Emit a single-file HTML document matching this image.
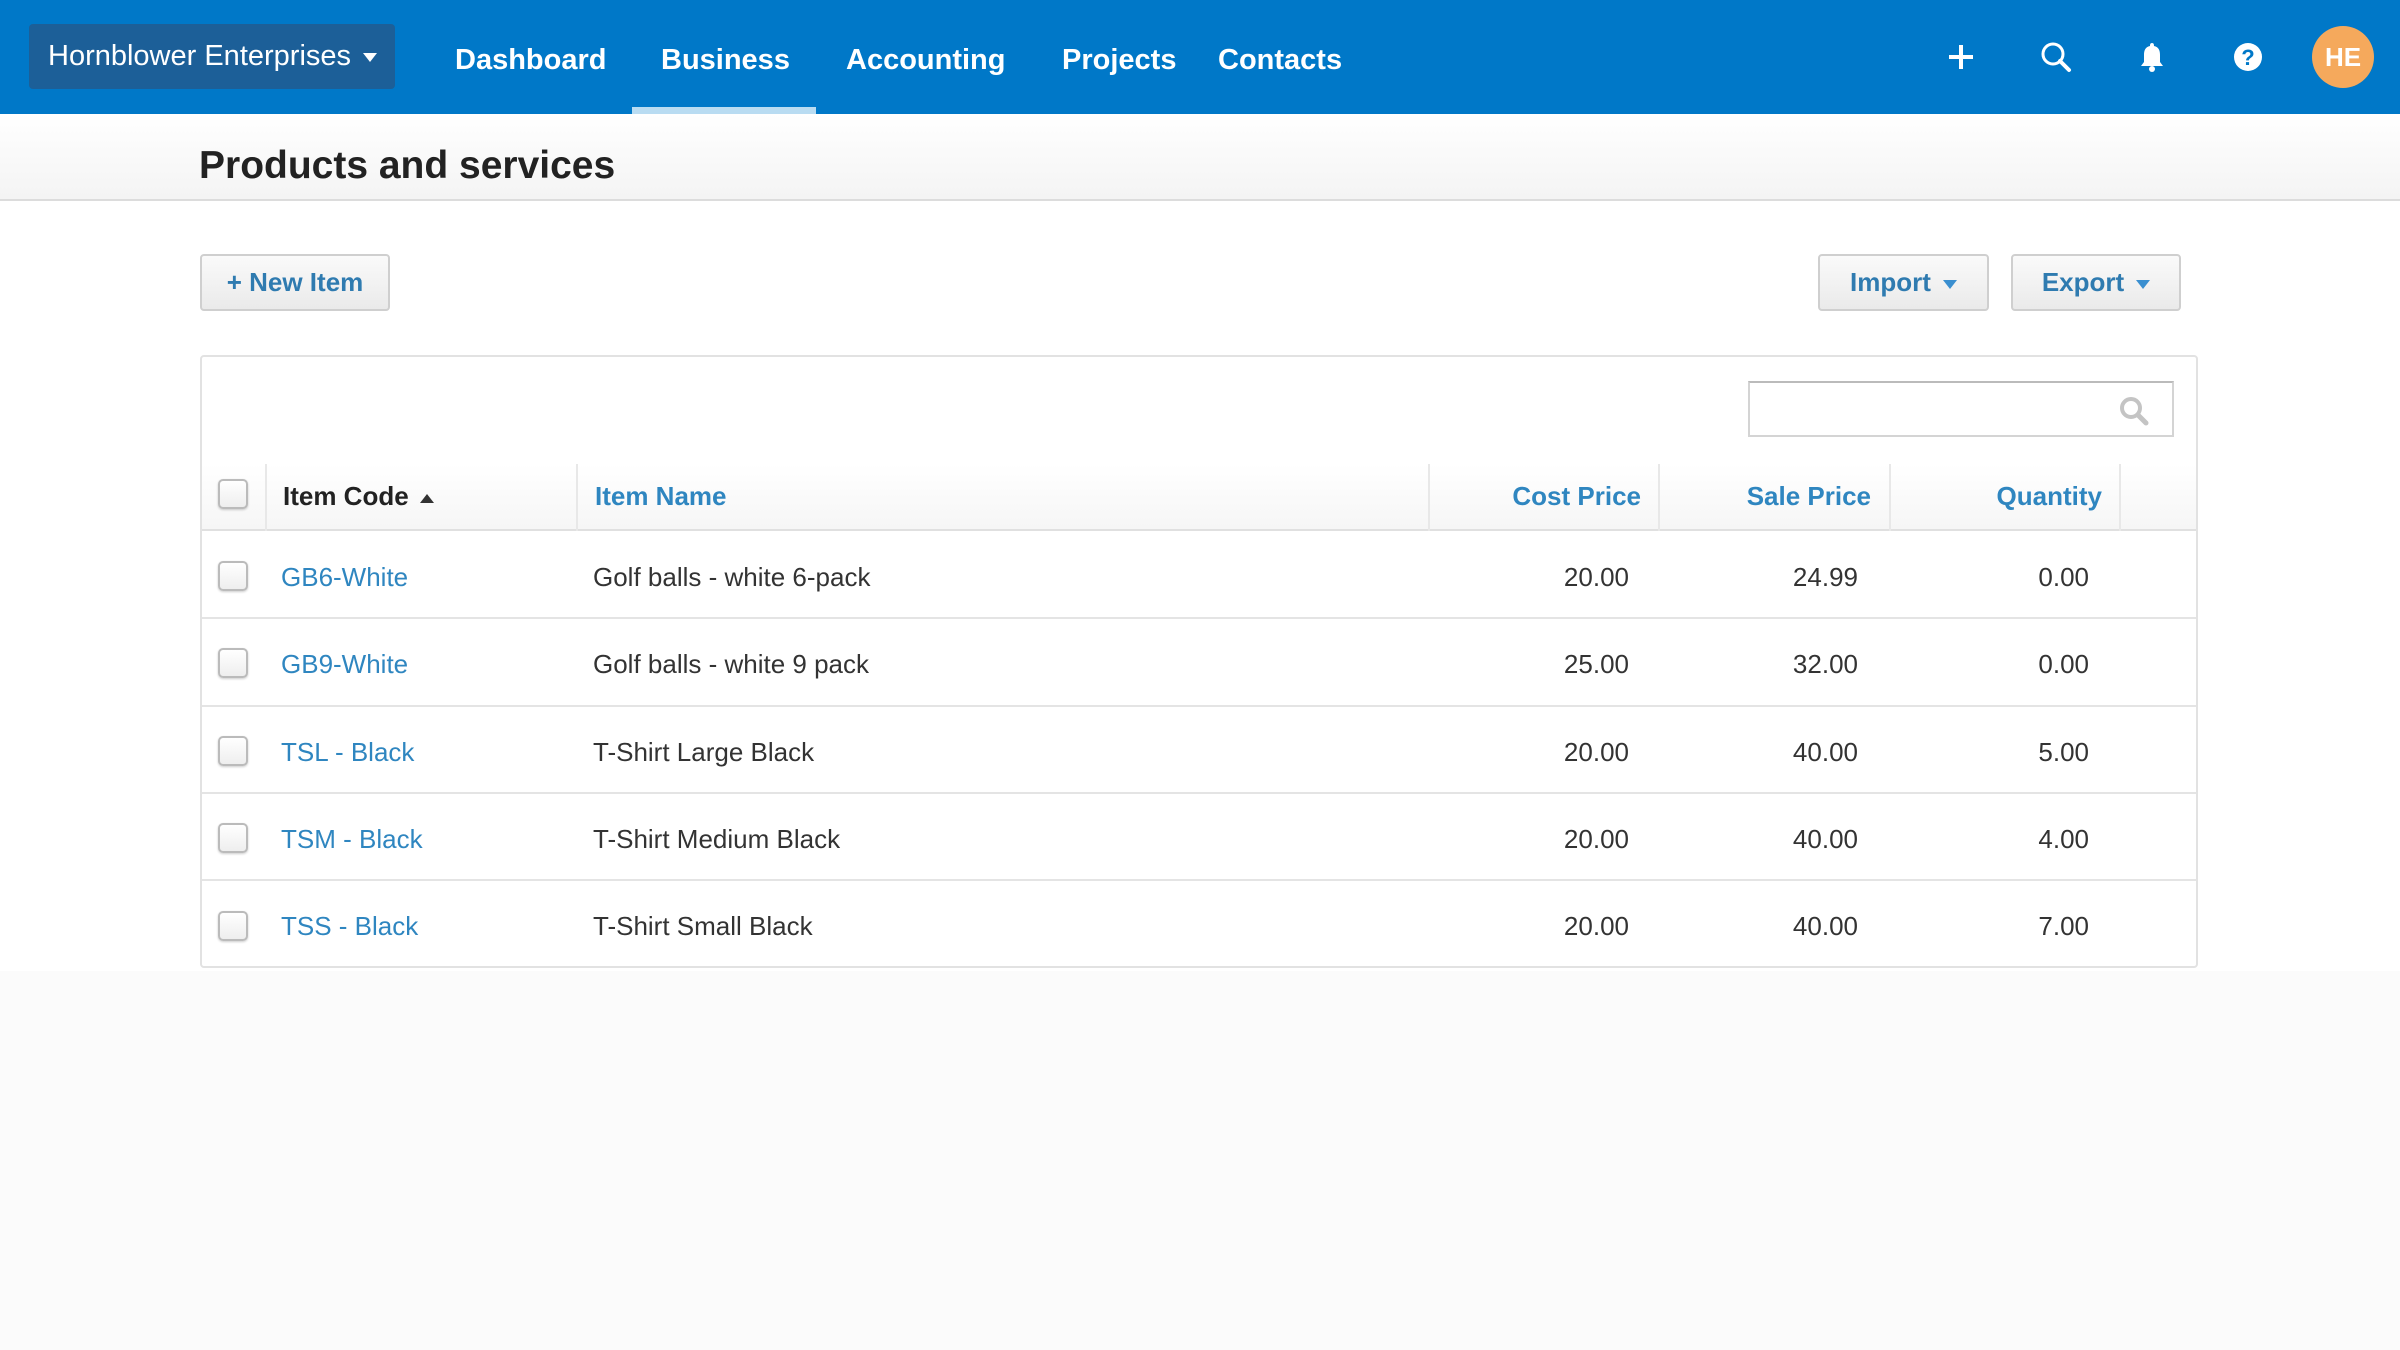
<!DOCTYPE html>
<html><head><meta charset="utf-8"><style>
*{margin:0;padding:0;box-sizing:border-box}
body{width:2400px;height:1350px;background:#fbfbfb;font-family:"Liberation Sans",sans-serif;position:relative;overflow:hidden;color:#333}
.nav{position:absolute;left:0;top:0;width:2400px;height:114px;background:#0078c8}
.org{position:absolute;left:29px;top:24px;width:366px;height:65px;background:#1c5f98;border-radius:4px;color:#fff;font-size:29px;line-height:65px;padding-left:19px}
.nl{position:absolute;top:40px;color:#fff;font-size:29px;font-weight:bold;line-height:40px}
.ul{position:absolute;left:632px;top:107px;width:184px;height:7px;background:#b9dcf2}
.hdr{position:absolute;left:0;top:114px;width:2400px;height:87px;background:linear-gradient(#fff,#f4f4f4);border-bottom:2px solid #dcdcdc}
.hdr h1{position:absolute;left:199px;top:30px;font-size:39px;font-weight:bold;color:#222}
.main{position:absolute;left:0;top:201px;width:2400px;height:770px;background:#fff}
.btn{position:absolute;top:254px;height:57px;border:2px solid #cfcfcf;border-radius:4px;background:linear-gradient(#fafafa,#eaeaea);color:#2f7bb0;font-size:26px;font-weight:bold;text-align:center;line-height:53px}
.tri{display:inline-block;width:0;height:0;border-left:7px solid transparent;border-right:7px solid transparent;border-top:9px solid #3a8fd0;vertical-align:middle;margin-left:12px}
.card{position:absolute;left:200px;top:355px;width:1998px;height:613px;border:2px solid #e2e2e2;border-radius:4px;background:#fff}
.search{position:absolute;left:1748px;top:381px;width:426px;height:56px;border:2px solid #d4d4d4;border-top-color:#bbb;background:#fff}
.th{position:absolute;top:464px;height:67px;left:202px;width:1994px;background:linear-gradient(#fff,#f6f6f6);border-bottom:2px solid #e0e0e0}
.div{position:absolute;top:464px;height:67px;width:2px;background:#e8e8e8}
.t{position:absolute;font-size:26px;line-height:30px;white-space:nowrap}
.h{font-weight:bold;color:#2f86c0}
.r{text-align:right}
.cb{position:absolute;left:218px;width:30px;height:30px;border:2px solid #bbb;border-radius:5px;background:linear-gradient(#fff,#eee);box-shadow:0 1px 2px rgba(0,0,0,.2)}
.row{position:absolute;left:202px;width:1994px;height:2px;background:#e4e4e4}
.lk{color:#2f86c0}
</style></head><body>
<div class="nav">
 <div class="org">Hornblower Enterprises <span style="display:inline-block;border-left:7px solid transparent;border-right:7px solid transparent;border-top:9px solid #fff;vertical-align:middle;margin-left:4px"></span></div>
 <div class="nl" style="left:455px">Dashboard</div>
 <div class="nl" style="left:661px">Business</div>
 <div class="nl" style="left:846px">Accounting</div>
 <div class="nl" style="left:1062px">Projects</div>
 <div class="nl" style="left:1218px">Contacts</div>
 <div class="ul"></div>
 <svg style="position:absolute;left:1946px;top:42px" width="30" height="30" viewBox="0 0 30 30"><path d="M15 3V27M3 15H27" stroke="#fff" stroke-width="4"/></svg>
 <svg style="position:absolute;left:2040px;top:41px" width="32" height="32" viewBox="0 0 32 32"><circle cx="13" cy="13" r="10" fill="none" stroke="#fff" stroke-width="3"/><path d="M20 20L29 29" stroke="#fff" stroke-width="4" stroke-linecap="round"/></svg>
 <svg style="position:absolute;left:2138px;top:41px" width="28" height="32" viewBox="0 0 28 32"><path d="M14 2C12 2 12 4 12 5C7 6 6 10 6 14V21L3 25H25L22 21V14C22 10 21 6 16 5C16 4 16 2 14 2Z" fill="#fff"/><circle cx="14" cy="28" r="3" fill="#fff"/></svg>
 <svg style="position:absolute;left:2233px;top:42px" width="30" height="30" viewBox="0 0 30 30"><circle cx="15" cy="15" r="14" fill="#fff"/><text x="15" y="23" text-anchor="middle" font-family="Liberation Sans" font-weight="bold" font-size="22" fill="#0078c8">?</text></svg>
 <div style="position:absolute;left:2312px;top:26px;width:62px;height:62px;border-radius:50%;background:#f5a95c;color:#fff;font-weight:bold;font-size:26px;text-align:center;line-height:62px">HE</div>
</div>
<div class="hdr"><h1>Products and services</h1></div>
<div class="main"></div>
<div class="btn" style="left:200px;width:190px">+ New Item</div>
<div class="btn" style="left:1818px;width:171px">Import<span class="tri"></span></div>
<div class="btn" style="left:2011px;width:170px">Export<span class="tri"></span></div>
<div class="card"></div>
<div class="search"><svg style="position:absolute;right:22px;top:12px" width="32" height="32" viewBox="0 0 32 32"><circle cx="13" cy="13" r="9" fill="none" stroke="#c4c4c4" stroke-width="4"/><path d="M20 20L28 28" stroke="#c4c4c4" stroke-width="5" stroke-linecap="round"/></svg></div>
<div class="th"></div>
<div class="div" style="left:265px"></div><div class="div" style="left:576px"></div><div class="div" style="left:1428px"></div><div class="div" style="left:1658px"></div><div class="div" style="left:1889px"></div><div class="div" style="left:2119px"></div>
<div class="cb" style="top:479px"></div>
<div class="t" style="left:283px;top:481px;font-weight:bold;color:#222">Item Code <span style="display:inline-block;border-left:7px solid transparent;border-right:7px solid transparent;border-bottom:9px solid #333;vertical-align:middle;margin-left:4px"></span></div>
<div class="t h" style="left:595px;top:481px">Item Name</div>
<div class="t h r" style="left:1441px;width:200px;top:481px">Cost Price</div>
<div class="t h r" style="left:1671px;width:200px;top:481px">Sale Price</div>
<div class="t h r" style="left:1902px;width:200px;top:481px">Quantity</div>

<div class="row" style="top:617px"></div><div class="row" style="top:705px"></div><div class="row" style="top:792px"></div><div class="row" style="top:879px"></div>

<div class="cb" style="top:561px"></div><div class="t lk" style="left:281px;top:562px">GB6-White</div><div class="t" style="left:593px;top:562px">Golf balls - white 6-pack</div><div class="t r" style="left:1429px;width:200px;top:562px">20.00</div><div class="t r" style="left:1658px;width:200px;top:562px">24.99</div><div class="t r" style="left:1889px;width:200px;top:562px">0.00</div>
<div class="cb" style="top:648px"></div><div class="t lk" style="left:281px;top:649px">GB9-White</div><div class="t" style="left:593px;top:649px">Golf balls - white 9 pack</div><div class="t r" style="left:1429px;width:200px;top:649px">25.00</div><div class="t r" style="left:1658px;width:200px;top:649px">32.00</div><div class="t r" style="left:1889px;width:200px;top:649px">0.00</div>
<div class="cb" style="top:736px"></div><div class="t lk" style="left:281px;top:737px">TSL - Black</div><div class="t" style="left:593px;top:737px">T-Shirt Large Black</div><div class="t r" style="left:1429px;width:200px;top:737px">20.00</div><div class="t r" style="left:1658px;width:200px;top:737px">40.00</div><div class="t r" style="left:1889px;width:200px;top:737px">5.00</div>
<div class="cb" style="top:823px"></div><div class="t lk" style="left:281px;top:824px">TSM - Black</div><div class="t" style="left:593px;top:824px">T-Shirt Medium Black</div><div class="t r" style="left:1429px;width:200px;top:824px">20.00</div><div class="t r" style="left:1658px;width:200px;top:824px">40.00</div><div class="t r" style="left:1889px;width:200px;top:824px">4.00</div>
<div class="cb" style="top:911px"></div><div class="t lk" style="left:281px;top:911px">TSS - Black</div><div class="t" style="left:593px;top:911px">T-Shirt Small Black</div><div class="t r" style="left:1429px;width:200px;top:911px">20.00</div><div class="t r" style="left:1658px;width:200px;top:911px">40.00</div><div class="t r" style="left:1889px;width:200px;top:911px">7.00</div>
</body></html>
